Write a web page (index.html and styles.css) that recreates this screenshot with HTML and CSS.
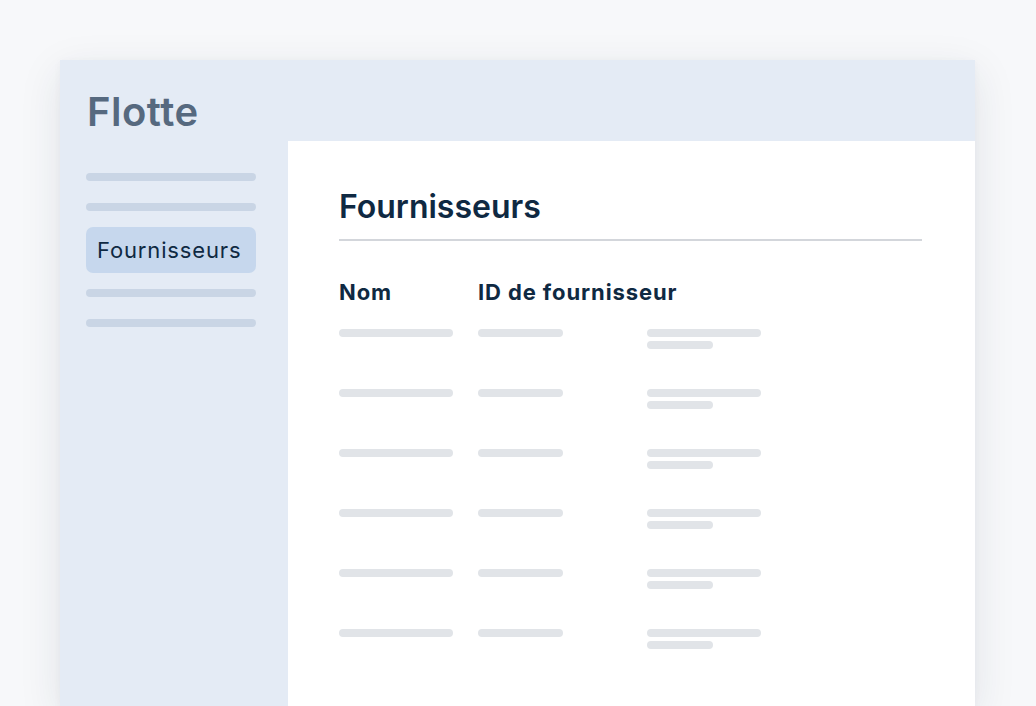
FILE: index.html
```html
<!DOCTYPE html>
<html lang="fr">
<head>
<meta charset="utf-8">
<title>Flotte</title>
<link rel="stylesheet" href="styles.css">
</head>
<body>
<div class="window">
  <header class="topbar">
    <h1 class="brand">Flotte</h1>
  </header>
  <nav class="sidebar">
    <div class="nav-bar"></div>
    <div class="nav-bar nav-bar--second"></div>
    <div class="nav-item nav-item--active">Fournisseurs</div>
    <div class="nav-bar nav-bar--third"></div>
    <div class="nav-bar nav-bar--fourth"></div>
  </nav>
  <main class="content">
    <h2 class="page-title">Fournisseurs</h2>
    <div class="table">
      <div class="th">Nom</div>
      <div class="th">ID de fournisseur</div>
      <div class="th"></div>

      <div class="cell"><span class="sk sk--name"></span></div>
      <div class="cell"><span class="sk sk--id"></span></div>
      <div class="cell cell--stack"><span class="sk sk--long"></span><span class="sk sk--short"></span></div>

      <div class="cell"><span class="sk sk--name"></span></div>
      <div class="cell"><span class="sk sk--id"></span></div>
      <div class="cell cell--stack"><span class="sk sk--long"></span><span class="sk sk--short"></span></div>

      <div class="cell"><span class="sk sk--name"></span></div>
      <div class="cell"><span class="sk sk--id"></span></div>
      <div class="cell cell--stack"><span class="sk sk--long"></span><span class="sk sk--short"></span></div>

      <div class="cell"><span class="sk sk--name"></span></div>
      <div class="cell"><span class="sk sk--id"></span></div>
      <div class="cell cell--stack"><span class="sk sk--long"></span><span class="sk sk--short"></span></div>

      <div class="cell"><span class="sk sk--name"></span></div>
      <div class="cell"><span class="sk sk--id"></span></div>
      <div class="cell cell--stack"><span class="sk sk--long"></span><span class="sk sk--short"></span></div>

      <div class="cell"><span class="sk sk--name"></span></div>
      <div class="cell"><span class="sk sk--id"></span></div>
      <div class="cell cell--stack"><span class="sk sk--long"></span><span class="sk sk--short"></span></div>
    </div>
  </main>
</div>
</body>
</html>
```

FILE: styles.css
```css
* { box-sizing: border-box; }

html, body {
  margin: 0;
  height: 100%;
  overflow: hidden;
}

body {
  background: #f7f8fa;
  font-family: Inter, "Noto Sans", "Liberation Sans", sans-serif;
  padding: 60px 61px 0 60px;
}

.window {
  width: 915px;
  height: 646px;
  background: #e4ebf5;
  display: grid;
  grid-template-columns: 228px 1fr;
  grid-template-rows: 81px 1fr;
  box-shadow: 0 12px 40px rgba(30, 45, 70, 0.10), 0 2px 8px rgba(30, 45, 70, 0.04);
}

.topbar {
  grid-column: 1 / 3;
  padding: 27.5px 0 0 27px;
}

.brand {
  margin: 0;
  font-size: 40px;
  line-height: 48px;
  font-weight: 600;
  letter-spacing: 0.5px;
  color: #56697f;
}

.sidebar {
  display: flex;
  flex-direction: column;
  padding: 32px 32px 0 26px;
}

.nav-bar {
  height: 8px;
  border-radius: 4px;
  background: #c9d5e5;
}

.nav-bar--second { margin-top: 22px; }
.nav-bar--third { margin-top: 16px; }
.nav-bar--fourth { margin-top: 22px; }

.nav-item {
  margin-top: 16px;
  height: 46px;
  line-height: 46px;
  padding-left: 11px;
  font-size: 22px;
  letter-spacing: 0.85px;
  color: #0f2942;
  border-radius: 7px;
  white-space: nowrap;
}

.nav-item--active {
  background: #c6d7ed;
}

.content {
  background: #ffffff;
  padding: 46px 53px 0 51px;
}

.page-title {
  margin: 0;
  font-size: 32px;
  line-height: 40px;
  font-weight: 600;
  color: #0f2942;
  padding-bottom: 12px;
  border-bottom: 2px solid #d3d6db;
}

.table {
  display: grid;
  grid-template-columns: 139px 169px 1fr;
  row-gap: 40px;
  margin-top: 37px;
}

.th {
  font-size: 22px;
  line-height: 28px;
  font-weight: 700;
  letter-spacing: 0.9px;
  color: #0f2942;
  white-space: nowrap;
  margin-bottom: -17px;
}

.cell {
  display: flex;
  flex-direction: column;
  gap: 4px;
  height: 20px;
}

.sk {
  display: block;
  height: 8px;
  border-radius: 4px;
  background: #e1e4e8;
}

.sk--name { width: 114px; }
.sk--id { width: 85px; }
.sk--long { width: 114px; }
.sk--short { width: 66px; }
```
